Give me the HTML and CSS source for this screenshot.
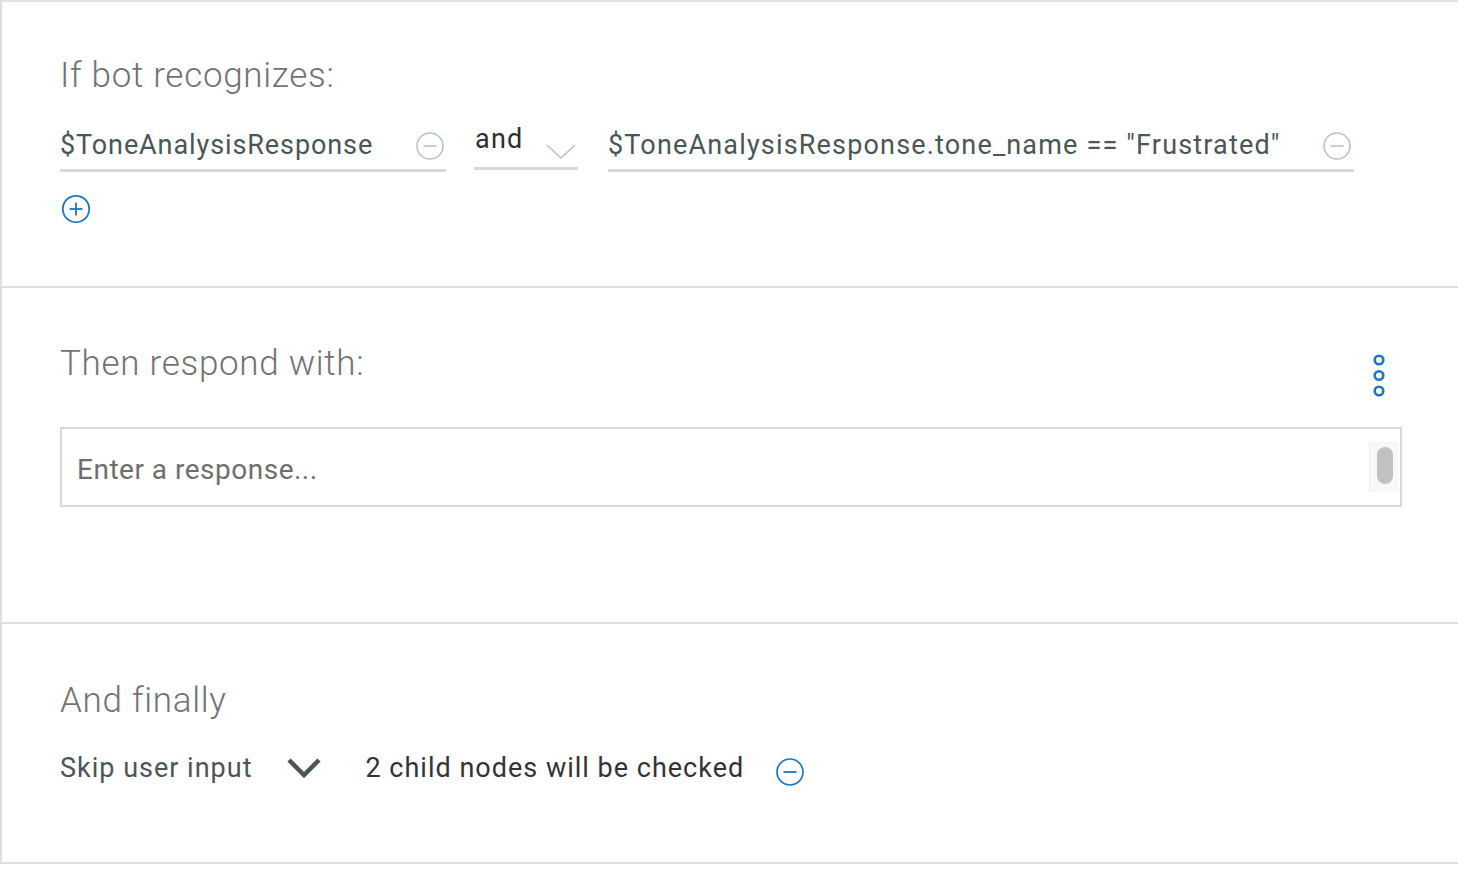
FILE: index.html
```html
<!DOCTYPE html>
<html>
<head>
<meta charset="utf-8">
<link rel="stylesheet" href="styles.css">
</head>
<body>
<div class="panel">
  <section class="sec sec-if">
    <h2 class="heading">If bot recognizes:</h2>
    <div class="cond-row">
      <div class="field field-a">
        <span class="field-text">$ToneAnalysisResponse</span>
        <svg class="icon-minus" width="30" height="30" viewBox="0 0 30 30"><circle cx="15" cy="15" r="13" fill="none" stroke="#b9c4c4" stroke-width="1.6"/><line x1="8.5" y1="15" x2="21.5" y2="15" stroke="#b9c4c4" stroke-width="1.6"/></svg>
      </div>
      <div class="field field-op">
        <span class="op-text">and</span>
        <svg class="icon-chev-light" width="30" height="20" viewBox="0 0 30 20"><polyline points="1,4 15,17 29,4" fill="none" stroke="#b9c4c4" stroke-width="1.6"/></svg>
      </div>
      <div class="field field-b">
        <span class="field-text field-text-long">$ToneAnalysisResponse.tone_name == "Frustrated"</span>
        <svg class="icon-minus" width="30" height="30" viewBox="0 0 30 30"><circle cx="15" cy="15" r="13" fill="none" stroke="#b9c4c4" stroke-width="1.6"/><line x1="8.5" y1="15" x2="21.5" y2="15" stroke="#b9c4c4" stroke-width="1.6"/></svg>
      </div>
    </div>
    <svg class="icon-plus" width="30" height="30" viewBox="0 0 30 30"><circle cx="15" cy="15" r="13.2" fill="none" stroke="#1a78c2" stroke-width="1.8"/><line x1="8.5" y1="15" x2="21.5" y2="15" stroke="#1a78c2" stroke-width="1.8"/><line x1="15" y1="8.5" x2="15" y2="21.5" stroke="#1a78c2" stroke-width="1.8"/></svg>
  </section>
  <section class="sec sec-then">
    <div class="then-head">
      <h2 class="heading">Then respond with:</h2>
      <svg class="icon-more" width="14" height="46" viewBox="0 0 14 46"><circle cx="7" cy="7" r="4.3" fill="none" stroke="#1a78c2" stroke-width="2.6"/><circle cx="7" cy="22.5" r="4.3" fill="none" stroke="#1a78c2" stroke-width="2.6"/><circle cx="7" cy="38" r="4.3" fill="none" stroke="#1a78c2" stroke-width="2.6"/></svg>
    </div>
    <div class="response-box">
      <span class="placeholder">Enter a response...</span>
      <div class="scroll-track"><div class="scroll-thumb"></div></div>
    </div>
  </section>
  <section class="sec sec-finally">
    <h2 class="heading">And finally</h2>
    <div class="final-row">
      <span class="skip-text">Skip user input</span>
      <svg class="icon-chev-dark" width="36" height="24" viewBox="0 0 36 24"><polyline points="3,4 18,19 33,4" fill="none" stroke="#4a5555" stroke-width="4.5"/></svg>
      <span class="child-text">2 child nodes will be checked</span>
      <svg class="icon-minus-blue" width="30" height="30" viewBox="0 0 30 30"><circle cx="15" cy="15" r="13" fill="none" stroke="#1a78c2" stroke-width="1.7"/><line x1="8.5" y1="15" x2="21.5" y2="15" stroke="#1a78c2" stroke-width="1.8"/></svg>
    </div>
  </section>
</div>
</body>
</html>
```
FILE: styles.css
```css
html, body {
  margin: 0;
  padding: 0;
  background: #ffffff;
}
body {
  font-family: Roboto, "Liberation Sans", sans-serif;
  width: 1458px;
  height: 870px;
  overflow: hidden;
}
.panel {
  border-left: 2px solid #dedede;
  border-top: 2px solid #e2e2e2;
}
.sec {
  border-bottom: 2px solid #dedede;
  padding-left: 58px;
  box-sizing: border-box;
}
.heading {
  margin: 0;
  font-weight: 300;
  font-size: 35px;
  line-height: 40px;
  letter-spacing: 0.7px;
  color: #737373;
}
.sec-if {
  height: 286px;
  padding-top: 54px;
}
.cond-row {
  display: flex;
  align-items: flex-end;
  margin-top: 28px;
}
.field {
  display: flex;
  align-items: center;
  justify-content: space-between;
  box-sizing: border-box;
  height: 46px;
  border-bottom: 3px solid #d8d8d8;
}
.field-a {
  width: 386px;
  padding-right: 1px;
}
.field-op {
  width: 104px;
  margin-left: 28px;
  margin-bottom: 2px;
  padding-left: 1px;
  padding-right: 2px;
}
.field-b {
  width: 746px;
  margin-left: 30px;
  padding-right: 2px;
}
.field-text {
  font-size: 27px;
  letter-spacing: 0.9px;
  color: #4b5656;
  margin-bottom: 6px;
}
.field-text-long {
  letter-spacing: 1.17px;
}
.op-text {
  font-size: 27px;
  letter-spacing: 1.2px;
  color: #2f2f2f;
  align-self: flex-start;
  margin-top: -1px;
}
.icon-chev-light {
  margin-top: 10px;
}
.icon-minus {
  margin-bottom: 4px;
}
.icon-plus {
  display: block;
  margin-top: 22px;
  margin-left: 1px;
}
.sec-then {
  height: 336px;
  padding-top: 56px;
  padding-right: 56px;
}
.then-head {
  display: flex;
  justify-content: space-between;
  align-items: flex-start;
  padding-right: 16px;
}
.icon-more {
  margin-top: 9px;
}
.response-box {
  margin-top: 28px;
  height: 80px;
  box-sizing: border-box;
  border: 2px solid #d8d8d8;
  display: flex;
  align-items: center;
  justify-content: space-between;
  padding-left: 15px;
}
.placeholder {
  font-size: 28px;
  letter-spacing: 0.5px;
  color: #6e6e6e;
  margin-top: 4px;
}
.scroll-track {
  align-self: flex-start;
  margin-top: 13px;
  width: 29px;
  height: 50px;
  background: #f8f8f8;
  border-left: 1px solid #ebebeb;
  box-sizing: border-box;
  padding: 5px 4px 0 7px;
  margin-right: 2px;
}
.scroll-thumb {
  width: 16px;
  height: 37px;
  border-radius: 8px;
  background: #c1c1c1;
}
.sec-finally {
  height: 240px;
  padding-top: 57px;
}
.final-row {
  display: flex;
  align-items: center;
  margin-top: 28px;
}
.skip-text {
  font-size: 27px;
  letter-spacing: 1px;
  color: #4b5555;
}
.icon-chev-dark {
  margin-left: 34px;
}
.child-text {
  margin-left: 43px;
  font-size: 27px;
  letter-spacing: 1px;
  color: #333333;
}
.icon-minus-blue {
  margin-left: 31px;
  margin-top: 8px;
}
```
